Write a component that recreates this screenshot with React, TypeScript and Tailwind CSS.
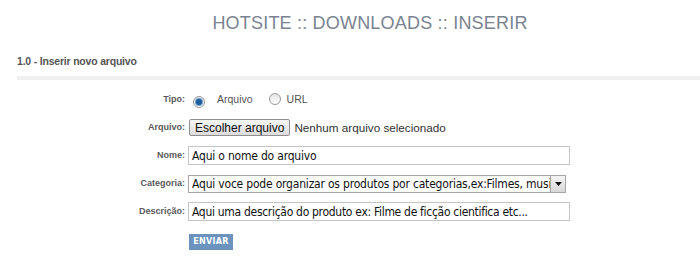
import React from "react";

// Formulário de inserção de downloads do hotsite
const labelCls =
  "w-[188px] shrink-0 pr-[3px] text-right font-bold text-[9px] text-[#5a5a5a] [font-family:'Liberation_Sans',Arial,sans-serif]";

function Row({ label, children }: { label: string; children: React.ReactNode }) {
  return (
    <div className="flex items-center h-[28px]">
      <div className={labelCls}>{label}</div>
      <div className="flex items-center">{children}</div>
    </div>
  );
}

function Radio({ checked }: { checked?: boolean }) {
  return (
    <span className="inline-flex items-center justify-center w-[12px] h-[12px] rounded-full border border-[#9a9a9a] bg-gradient-to-b from-[#e4e4e4] to-[#ffffff]">
      {checked && <span className="w-[6px] h-[6px] rounded-full bg-[#1d5d9b] ring-1 ring-[#6f9fd0]" />}
    </span>
  );
}

export default function App() {
  return (
    <div className="w-[700px] h-[280px] bg-white overflow-hidden [font-family:'Liberation_Sans',Arial,sans-serif]">
      {/* título */}
      <div className="pl-[40px] pt-[10px] h-[40px] text-center text-[18px] text-[#7a8491] tracking-[0.2px]">
        HOTSITE :: DOWNLOADS :: INSERIR
      </div>

      <div className="pl-[17px] pt-[14px] text-[10.5px] font-bold text-[#555555] tracking-[-0.2px]">
        1.0 - Inserir novo arquivo
      </div>
      <div className="ml-[17px] mt-[6px] h-[4px] bg-[#f0f0f0]" />

      <div className="pt-[6px]">
        <Row label="Tipo:">
          <span className="ml-[5px]"><Radio checked /></span>
          <span className="ml-[12px] text-[10.5px] text-[#555555]">Arquivo</span>
          <span className="ml-[16px]"><Radio /></span>
          <span className="ml-[6px] text-[10.5px] text-[#555555]">URL</span>
        </Row>

        <Row label="Arquivo:">
          <span className="ml-[1px] px-[5px] h-[17px] flex items-center border border-[#8f8f8f] rounded-[2px] bg-gradient-to-b from-[#f6f6f6] to-[#dcdcdc] text-[12px] text-[#111111]">
            Escolher arquivo
          </span>
          <span className="ml-[4px] text-[11.7px] text-[#333333]">Nenhum arquivo selecionado</span>
        </Row>

        <Row label="Nome:">
          <div className="w-[382px] h-[19px] border border-[#c5c5c5] flex items-center px-[3px] text-[12px] text-[#111111] [font-family:'DejaVu_Sans_Condensed','Liberation_Sans',sans-serif] tracking-[-0.2px]">
            Aqui o nome do arquivo
          </div>
        </Row>

        <Row label="Categoria:">
          <div className="w-[378px] h-[18px] border border-[#a5a5a5] flex items-center text-[12px] text-[#111111] [font-family:'DejaVu_Sans_Condensed','Liberation_Sans',sans-serif] tracking-[-0.2px]">
            <span className="flex-1 pl-[3px] whitespace-nowrap overflow-hidden">
              Aqui voce pode organizar os produtos por categorias,ex:Filmes, musicas
            </span>
            <span className="w-[15px] h-[16px] border-l border-[#a5a5a5] bg-gradient-to-b from-[#f4f4f4] to-[#d8d8d8] flex items-center justify-center">
              <svg width="7" height="4" viewBox="0 0 7 4"><path d="M0 0h7L3.5 4z" fill="#111" /></svg>
            </span>
          </div>
        </Row>

        <Row label="Descrição:">
          <div className="w-[382px] h-[19px] border border-[#c5c5c5] flex items-center px-[3px] text-[12px] text-[#111111] [font-family:'DejaVu_Sans_Condensed','Liberation_Sans',sans-serif] tracking-[-0.3px]">
            Aqui uma descrição do produto ex: Filme de ficção cientifica etc...
          </div>
        </Row>

        <div className="flex h-[32px] items-center">
          <div className="w-[189px]" />
          <span className="w-[44px] h-[16px] bg-[#6b93bd] text-white text-[8px] font-bold flex items-center justify-center tracking-[0.3px] [font-family:'DejaVu_Sans',Verdana,sans-serif]">
            ENVIAR
          </span>
        </div>
      </div>
    </div>
  );
}
